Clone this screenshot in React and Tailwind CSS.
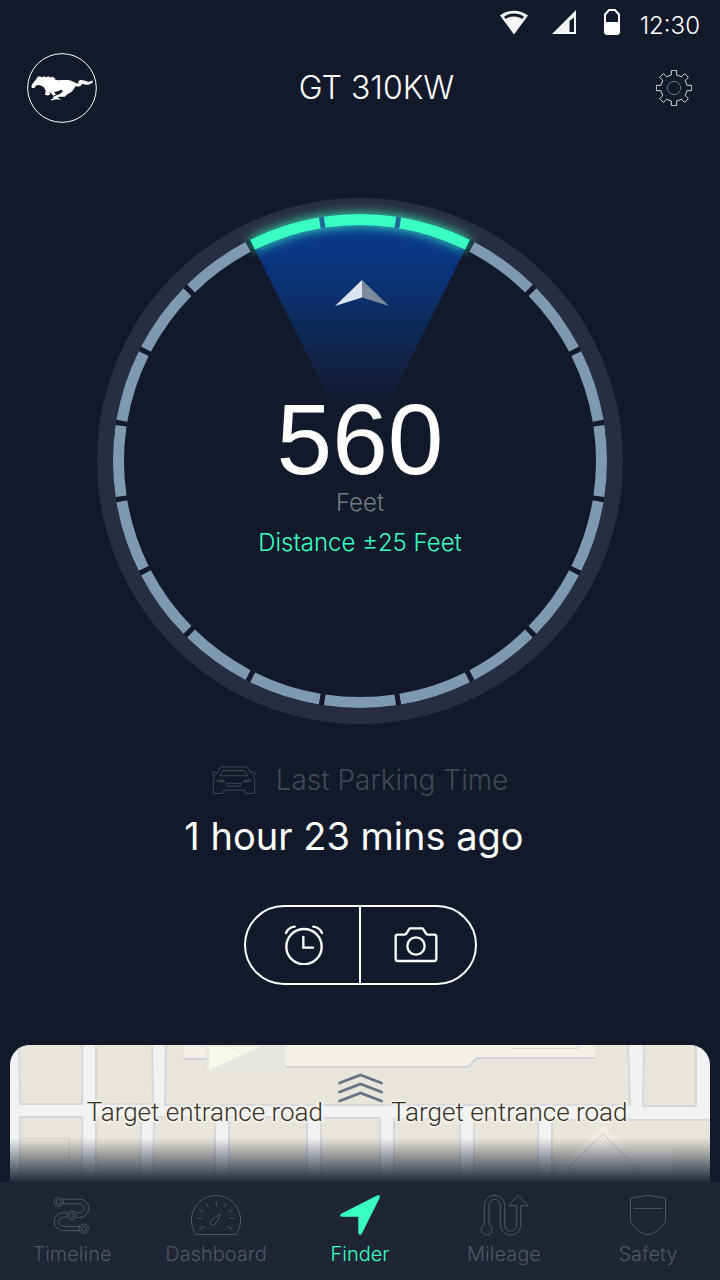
import React, { useState } from "react";
import clsx from "clsx";

const SEGMENT = 18; // degrees per dial segment
const ACTIVE = [0, 1, 19];

// point on the dial, angle measured clockwise from the top
function polar(r, deg) {
  const a = (deg * Math.PI) / 180;
  return `${(263 + r * Math.sin(a)).toFixed(2)} ${(263 - r * Math.cos(a)).toFixed(2)}`;
}

function segmentPath(index) {
  const from = index * SEGMENT - 8.4;
  const to = index * SEGMENT + 8.4;
  return `M${polar(241.5, from)} A241.5 241.5 0 0 1 ${polar(241.5, to)}`;
}

function gearPath() {
  const tooth = [[-8, -39], [-8, -53], [8, -53], [8, -39]];
  let d = "";
  for (let k = 0; k < 8; k++) {
    const a = (k * Math.PI) / 4;
    tooth.forEach(([x, y], i) => {
      const px = (x * Math.cos(a) - y * Math.sin(a)).toFixed(2);
      const py = (x * Math.sin(a) + y * Math.cos(a)).toFixed(2);
      if (k === 0 && i === 0) d += `M${px} ${py}`;
      else if (i === 0) d += `A40 40 0 0 1 ${px} ${py}`;
      else d += `L${px} ${py}`;
    });
  }
  return d + "A40 40 0 0 1 -8 -39Z";
}

function StatusBar() {
  return (
    <div className="flex items-start justify-end pt-2 pr-5 h-[53px]">
      <svg className="w-7 h-7 mr-6" viewBox="0 0 28 28" fill="#f5f5f5" aria-hidden="true">
        <path fillRule="evenodd" d="M0 7.500C8 1 20 1 28 7.500L14 26.500ZM4 8.700L5.800 11C10 7.600 18 7.600 22.200 11L24 8.700C18 4.300 10 4.300 4 8.700Z" />
      </svg>
      <svg className="w-6 h-7 mr-7" viewBox="0 0 24 28" fill="#f5f5f5" aria-hidden="true">
        <path fillRule="evenodd" d="M24 2V26H0ZM17.500 13V24H22V9.500Z" />
      </svg>
      <svg className="w-4 h-7 mr-5" viewBox="0 0 16 28" aria-hidden="true">
        <path d="M1 6.500L5 2H11L15 6.500V23Q15 26 12 26H4Q1 26 1 23Z" fill="none" stroke="#fff" strokeWidth="2" />
        <path d="M0 14H16V23Q16 27 12 27H4Q0 27 0 23Z" fill="#fff" />
      </svg>
      <span className="text-2xl leading-9 font-light">12:30</span>
    </div>
  );
}

function Logo() {
  return (
    <svg className="w-[70px] h-[70px]" viewBox="81 158.500 210 210" aria-hidden="true">
      <circle cx="186" cy="263.500" r="103" fill="none" stroke="#fff" strokeWidth="3" />
      <path
        fill="#fff"
        d="M94 258L98 250L108 238L113 230L120 228L125 232L132 228L138 231L146 228L150 232L158 230L166 235L165 239C178 242 195 237 212 241C222 245 230 252 236 249C232 242 240 239 247 240C256 241 262 246 270 244C276 243 278 238 279 243C278 250 268 254 258 254C250 252 246 250 244 254C243 260 232 260 226 258C222 270 212 278 204 281L194 290L178 290L173 292L183 299L168 297L154 301L152 298L162 294L157 291L168 286L182 280L188 273L185 269L172 273L162 276L168 283L160 287L154 280L148 276L150 284L142 286L135 284L137 272L132 262C126 256 116 252 108 256L104 263L96 264Z"
      />
    </svg>
  );
}

function Dial() {
  return (
    <svg className="w-full col-start-1 row-start-1" viewBox="0 0 526 526" aria-hidden="true">
      <defs>
        <linearGradient id="beam" x1="0" y1="28" x2="0" y2="212" gradientUnits="userSpaceOnUse">
          <stop offset="0" stopColor="#08388f" />
          <stop offset="0.25" stopColor="#0a347b" />
          <stop offset="0.65" stopColor="#10264f" />
          <stop offset="1" stopColor="#12192a" />
        </linearGradient>
        <filter id="glow" x="-20%" y="-60%" width="140%" height="220%">
          <feGaussianBlur stdDeviation="6" />
        </filter>
      </defs>
      <circle cx="263" cy="263" r="255" fill="none" stroke="#272e42" strokeWidth="16" />
      <path d={`M263 263L${polar(247, -26.4)}A247 247 0 0 1 ${polar(247, 26.4)}Z`} fill="url(#beam)" />
      <path d={`M${polar(241.5, -26.4)}A241.5 241.5 0 0 1 ${polar(241.5, 26.4)}`} fill="none" stroke="#3affc3" strokeOpacity="0.9" strokeWidth="12" filter="url(#glow)" />
      <path d={`M${polar(241.5, -9.6)}A241.5 241.5 0 0 1 ${polar(241.5, -8.4)}M${polar(241.5, 8.4)}A241.5 241.5 0 0 1 ${polar(241.5, 9.6)}`} fill="none" stroke="#20689a" strokeWidth="11" />
      {Array.from({ length: 20 }, (_, i) => (
        <path key={i} d={segmentPath(i)} fill="none" stroke={ACTIVE.includes(i) ? "#3affc3" : "#7f99b0"} strokeWidth="11" />
      ))}
      <path d="M265 82V99.500L238 108Z" fill="#d9e4f0" />
      <path d="M265 82V99.500L292 108Z" fill="#7c8b9b" />
    </svg>
  );
}

function MapTiles() {
  return (
    <svg className="block w-full h-[137px]" viewBox="0 0 700 137" preserveAspectRatio="xMidYMin slice" aria-hidden="true">
      <rect width="700" height="137" fill="#f2f2f3" />
      <g fill="#e8e5da" stroke="#d7d7db" strokeWidth="2">
        <path d="M9-5H72V59H10ZM86-5H142L143 59H86ZM156-5H618L620 60H155ZM634-5H686V61H633Z" />
        <path d="M10 72H72V140H10ZM86 72H131L130 140H86ZM144 72H205V140H143ZM219 72H297V140H219ZM311 73H370V140H311ZM384 74H450V140H384ZM464 74H528V140H464ZM542 75H705V140H542Z" />
      </g>
      <path d="M10 93H59V140" fill="none" stroke="#dedbd2" strokeWidth="2" />
      <path d="M275 0H585V12H467L458 21H275Z" fill="#f3f0e8" />
      <path d="M275 22H458L467 13H585" fill="none" stroke="#d3d2da" strokeWidth="2" />
      <path d="M502 3.500H568V0" fill="none" stroke="#d6d5dd" />
      <path d="M173 0H197V13H173Z" fill="#f3f0ea" stroke="#e3e1dc" />
      <path d="M173 14H197" stroke="#d3d2da" strokeWidth="2" />
      <path d="M198 0H275V26H198Z" fill="#f8f8ea" stroke="#e8e8e3" strokeWidth="2" />
      <path d="M200 25L253 0H274V25Z" fill="#e7e6e3" />
      <path d="M214 0L233 8" stroke="#ecebdc" />
      <path d="M593 80L547 125V137H663V102H617Z" fill="#f1eee7" fillOpacity="0.8" />
      <path d="M593 89L558 123L570 137M593 89L628 124L615 137" fill="none" stroke="#c9c7c4" />
    </svg>
  );
}

function MapPanel() {
  const label =
    "font-[Roboto,sans-serif] text-[26px] leading-8 font-light text-[#38301f] [text-shadow:0_0_2px_#f5f4f0,2px_0_2px_#f5f4f0,-2px_0_2px_#f5f4f0,0_2px_2px_#f5f4f0,0_-2px_2px_#f5f4f0,0_0_4px_#f5f4f0,0_0_4px_#f5f4f0]";
  return (
    <section className="relative mx-[10px] mt-auto overflow-hidden rounded-t-[20px]">
      <MapTiles />
      <div className="absolute inset-x-0 bottom-0 h-11 bg-linear-to-b from-[#12192b]/0 to-[#20283a]" />
      <div className="absolute inset-x-0 top-[51px] flex justify-center gap-[68px] pr-[6px]">
        <span className={label}>Target entrance road</span>
        <span className={label}>Target entrance road</span>
      </div>
      <button type="button" aria-label="Expand map" className="absolute inset-x-0 top-[27px] mx-auto w-12">
        <svg className="w-12 h-8" viewBox="0 0 48 32" fill="none" stroke="#637583" strokeWidth="2.800" strokeLinecap="round">
          <path d="M3.500 11L24.500 3L45.500 11M3.500 20L24.500 12L45.500 20M3.500 29L24.500 21L45.500 29" />
        </svg>
      </button>
    </section>
  );
}

// tab icons share a 54x42 canvas
const tabs = [
  {
    label: "Timeline",
    icon: (
      <g>
        <path d="M18 5.200H34.700A9.100 9.100 0 0 1 34.700 23.400H30.500M18 9.800H34.700A4.450 4.450 0 0 1 34.700 18.700H30.500M22.500 18.700H18.200A9 9 0 0 0 18.200 36.700H34.500M22.500 23.300H18.200A4.500 4.500 0 0 0 18.200 32.300H34.500" />
        <circle cx="13.700" cy="8" r="4.600" />
        <circle cx="13.700" cy="8" r="2.500" />
        <circle cx="26.400" cy="21.300" r="4.500" />
        <circle cx="26.400" cy="21.300" r="2.500" />
        <circle cx="38.700" cy="34.700" r="4.600" />
        <circle cx="38.700" cy="34.700" r="2.500" />
      </g>
    ),
  },
  {
    label: "Dashboard",
    icon: (
      <g>
        <path d="M7 40.500A24.600 24.600 0 1 1 47 40.500Z" />
        <path d="M27.300 7.500V12M17.200 9.700L19.500 13.500M37.500 9.700L35 13.500M10.500 15.500L14.500 18.500M43.300 15.500L39.500 18.500M8.200 24.300H13.300M40.500 24.300H45.500M10.500 35L15 32.300M43 35L38.500 32.300" />
        <path d="M31.300 20.500C28 22 24.500 24 22.500 26.200C19.800 29 22 32 25 30.500C28.500 28.500 29.500 24.500 31.300 20.500Z" />
      </g>
    ),
  },
  {
    label: "Finder",
    icon: <path d="M44.500 1.300Q47.600 0.600 46.700 3.700L29 39.300Q27 42.300 25.300 39.300V22.700H8.500Q6 21.500 8.200 19.700Z" fill="currentColor" stroke="none" />,
  },
  {
    label: "Mileage",
    icon: (
      <path d="M7.300 30.500V11.500A10.200 10.200 0 0 1 27.700 11.500V31A6 6 0 0 0 39.700 31V11.700H31.700L41.300 1.300L51 11.700H43.700V31A10.200 10.200 0 0 1 23.300 31V11A5.650 5.650 0 0 0 12 11V30.500A5.500 5.500 0 1 1 7.300 30.500Z" />
    ),
  },
  {
    label: "Safety",
    icon: <path d="M9.500 4.400L26.800 1.300L44.500 4.400V26C43 33 34 39.500 26.800 40.700C19.500 39.500 11 33 9.500 26ZM12.700 14.400H41.500" />,
  },
];

function TabBar({ current, onChange }) {
  return (
    <nav className="grid grid-cols-5 h-[98px] bg-[#1f2535]">
      {tabs.map((t) => (
        <button
          key={t.label}
          type="button"
          onClick={() => onChange(t.label)}
          className={clsx("flex flex-col items-center pt-3", current === t.label ? "text-[#3affc3]" : "text-[#505463]")}
        >
          <svg className="w-[54px] h-[42px]" viewBox="0 0 54 42" fill="none" stroke="currentColor" strokeWidth="1" aria-hidden="true">
            {t.icon}
          </svg>
          <span className="mt-1 text-xl leading-7 font-light">{t.label}</span>
        </button>
      ))}
    </nav>
  );
}

export default function App() {
  const [tab, setTab] = useState("Finder");

  return (
    <div className="flex flex-col min-h-screen bg-[#12192a] text-white font-[Inter,sans-serif]">
      <StatusBar />

      <header className="flex items-center justify-between pl-[27px] pr-7">
        <Logo />
        <h1 className="text-[32px] leading-10 font-light">GT 310KW</h1>
        <button type="button" aria-label="Settings">
          <svg className="w-9 h-9" viewBox="-54 -54 108 108" fill="none" stroke="#d5d8de" strokeWidth="3">
            <path d={gearPath()} />
            <circle r="20" stroke="#70757f" />
          </svg>
        </button>
      </header>

      <main className="flex flex-col items-center pt-[75px] pb-[60px]">
        <div className="grid w-full max-w-[526px]">
          <Dial />
          <div className="col-start-1 row-start-1 self-center flex flex-col items-center pt-7">
            <span className="text-[100px] leading-[96px] font-['Liberation_Sans',sans-serif]">560</span>
            <span className="text-2xl leading-8 font-light text-[#757985]">Feet</span>
            <span className="mt-2 text-2xl leading-8 font-light text-[#3affc3]">Distance ±25 Feet</span>
          </div>
        </div>

        <div className="flex items-center gap-5 mt-10 text-[#434856]">
          <svg className="w-11 h-[30px]" viewBox="119 45 134 90" fill="none" stroke="currentColor" strokeWidth="3" strokeLinejoin="round" aria-hidden="true">
            <path d="M133 70L143 54Q146 50 152 50H219Q225 50 228 54L239 70Q241 65 247 65Q253 68 250 74L244 76L249 88V126Q249 131 244 131H225Q220 131 220 126V121H153V126Q153 131 148 131H128Q123 131 123 126V88L128 76L121 74Q118 68 124 65Q131 65 133 70Z" />
            <path d="M142 77L153 61H216L228 77ZM134 90L153 91L158 95H138ZM238 90L219 91L214 95H233ZM163 100H209Q209 109 201 109H171Q163 109 163 100Z" />
          </svg>
          <span className="text-[28px] leading-8 font-light">Last Parking Time</span>
        </div>
        <p className="mt-4 pr-3 text-[38px] leading-[48px]">1 hour 23 mins ago</p>

        <div className="flex mt-[45px] w-[233px] h-20 rounded-full border-2 border-white">
          <button type="button" aria-label="Set reminder" className="flex flex-1 items-center justify-center pl-1 border-r-2 border-white">
            <svg className="w-10 h-10" viewBox="150 88 120 120" fill="none" stroke="#fff" strokeWidth="7" strokeLinecap="round" aria-hidden="true">
              <circle cx="210" cy="153" r="53" />
              <path d="M208 124V156H237M156 112Q163 95 182 93M238 93Q257 95 264 112" />
            </svg>
          </button>
          <button type="button" aria-label="Take photo" className="flex flex-1 items-center justify-center pr-1">
            <svg className="w-11 h-10" viewBox="476 88 132 120" fill="none" stroke="#fff" strokeWidth="7" strokeLinejoin="round" aria-hidden="true">
              <path d="M487 117H507Q512 117 514 112L523 98H562L571 112Q573 117 578 117H597Q603 117 603 123V190Q603 196 597 196H487Q481 196 481 190V123Q481 117 487 117Z" />
              <circle cx="542" cy="151" r="26" />
            </svg>
          </button>
        </div>
      </main>

      <MapPanel />
      <TabBar current={tab} onChange={setTab} />
    </div>
  );
}
